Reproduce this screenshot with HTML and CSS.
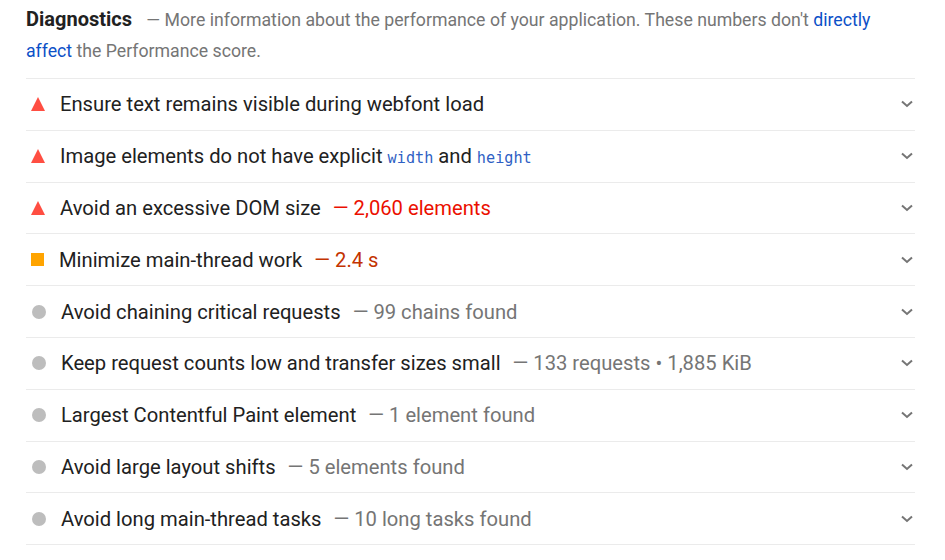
FILE: index.html
```html
<!DOCTYPE html>
<html>
<head>
<meta charset="utf-8">
<link rel="stylesheet" href="styles.css">
</head>
<body>
<div class="group">
  <div class="header">
    <span class="title">Diagnostics</span>
    <span class="desc">— More information about the performance of your application. These numbers don't <a class="link">directly affect</a> the Performance score.</span>
  </div>
  <div class="audit">
    <span class="icon fail"></span>
    <span class="atitle">Ensure text remains visible during webfont load</span>
    <span class="chev"><svg width="12" height="8" viewBox="0 0 12 8"><path d="M1 1.5 L6 6 L11 1.5" fill="none" stroke="#757575" stroke-width="2"/></svg></span>
  </div>
  <div class="audit">
    <span class="icon fail"></span>
    <span class="atitle">Image elements do not have explicit <code>width</code> and <code>height</code></span>
    <span class="chev"><svg width="12" height="8" viewBox="0 0 12 8"><path d="M1 1.5 L6 6 L11 1.5" fill="none" stroke="#757575" stroke-width="2"/></svg></span>
  </div>
  <div class="audit">
    <span class="icon fail"></span>
    <span class="atitle">Avoid an excessive DOM size</span>
    <span class="val v-fail">— 2,060 elements</span>
    <span class="chev"><svg width="12" height="8" viewBox="0 0 12 8"><path d="M1 1.5 L6 6 L11 1.5" fill="none" stroke="#757575" stroke-width="2"/></svg></span>
  </div>
  <div class="audit">
    <span class="icon avg"></span>
    <span class="atitle">Minimize main-thread work</span>
    <span class="val v-avg">— 2.4 s</span>
    <span class="chev"><svg width="12" height="8" viewBox="0 0 12 8"><path d="M1 1.5 L6 6 L11 1.5" fill="none" stroke="#757575" stroke-width="2"/></svg></span>
  </div>
  <div class="audit">
    <span class="icon info"></span>
    <span class="atitle">Avoid chaining critical requests</span>
    <span class="val">— 99 chains found</span>
    <span class="chev"><svg width="12" height="8" viewBox="0 0 12 8"><path d="M1 1.5 L6 6 L11 1.5" fill="none" stroke="#757575" stroke-width="2"/></svg></span>
  </div>
  <div class="audit">
    <span class="icon info"></span>
    <span class="atitle">Keep request counts low and transfer sizes small</span>
    <span class="val">— 133 requests • 1,885 KiB</span>
    <span class="chev"><svg width="12" height="8" viewBox="0 0 12 8"><path d="M1 1.5 L6 6 L11 1.5" fill="none" stroke="#757575" stroke-width="2"/></svg></span>
  </div>
  <div class="audit">
    <span class="icon info"></span>
    <span class="atitle">Largest Contentful Paint element</span>
    <span class="val">— 1 element found</span>
    <span class="chev"><svg width="12" height="8" viewBox="0 0 12 8"><path d="M1 1.5 L6 6 L11 1.5" fill="none" stroke="#757575" stroke-width="2"/></svg></span>
  </div>
  <div class="audit">
    <span class="icon info"></span>
    <span class="atitle">Avoid large layout shifts</span>
    <span class="val">— 5 elements found</span>
    <span class="chev"><svg width="12" height="8" viewBox="0 0 12 8"><path d="M1 1.5 L6 6 L11 1.5" fill="none" stroke="#757575" stroke-width="2"/></svg></span>
  </div>
  <div class="audit">
    <span class="icon info"></span>
    <span class="atitle">Avoid long main-thread tasks</span>
    <span class="val">— 10 long tasks found</span>
    <span class="chev"><svg width="12" height="8" viewBox="0 0 12 8"><path d="M1 1.5 L6 6 L11 1.5" fill="none" stroke="#757575" stroke-width="2"/></svg></span>
  </div>
</div>
</body>
</html>
```
FILE: styles.css
```css
html, body {
  margin: 0;
  padding: 0;
  background: #fff;
}
body {
  font-family: Roboto, "Liberation Sans", sans-serif;
  color: #212121;
}
.group {
  margin: 0 30px 0 26px;
  padding-top: 4px;
}
.header {
  font-size: 17.7px;
  line-height: 31px;
  padding-bottom: 11px;
  border-bottom: 1px solid #ebebeb;
}
.title {
  font-size: 20px;
  font-weight: 700;
  color: #212121;
  margin-right: 10px;
}
.desc {
  color: #757575;
}
.link {
  color: #0c50c7;
  text-decoration: none;
}
.audit {
  display: flex;
  align-items: center;
  height: 50.8px;
  border-bottom: 1px solid #ebebeb;
  font-size: 20.2px;
  padding-left: 5px;
}
.icon.fail {
  flex: none;
  width: 0;
  height: 0;
  border-left: 7.5px solid transparent;
  border-right: 7.5px solid transparent;
  border-bottom: 14px solid #ff4e42;
  margin-right: 15px;
}
.icon.avg {
  flex: none;
  width: 13px;
  height: 13px;
  background: #ffa400;
  margin-right: 15px;
}
.icon.info {
  flex: none;
  width: 14px;
  height: 14px;
  border-radius: 50%;
  background: #bdbdbd;
  margin-left: 1px;
  margin-right: 15px;
}
.atitle {
  color: #212121;
}
code {
  font-family: "DejaVu Sans Mono", "Liberation Mono", monospace;
  font-size: 15.2px;
  color: #2f5fc4;
}
.val {
  color: #757575;
  margin-left: 12px;
}
.v-fail { color: #eb0f00; }
.v-avg { color: #c33300; }
.chev {
  margin-left: auto;
  margin-right: 2px;
  display: flex;
}
```
